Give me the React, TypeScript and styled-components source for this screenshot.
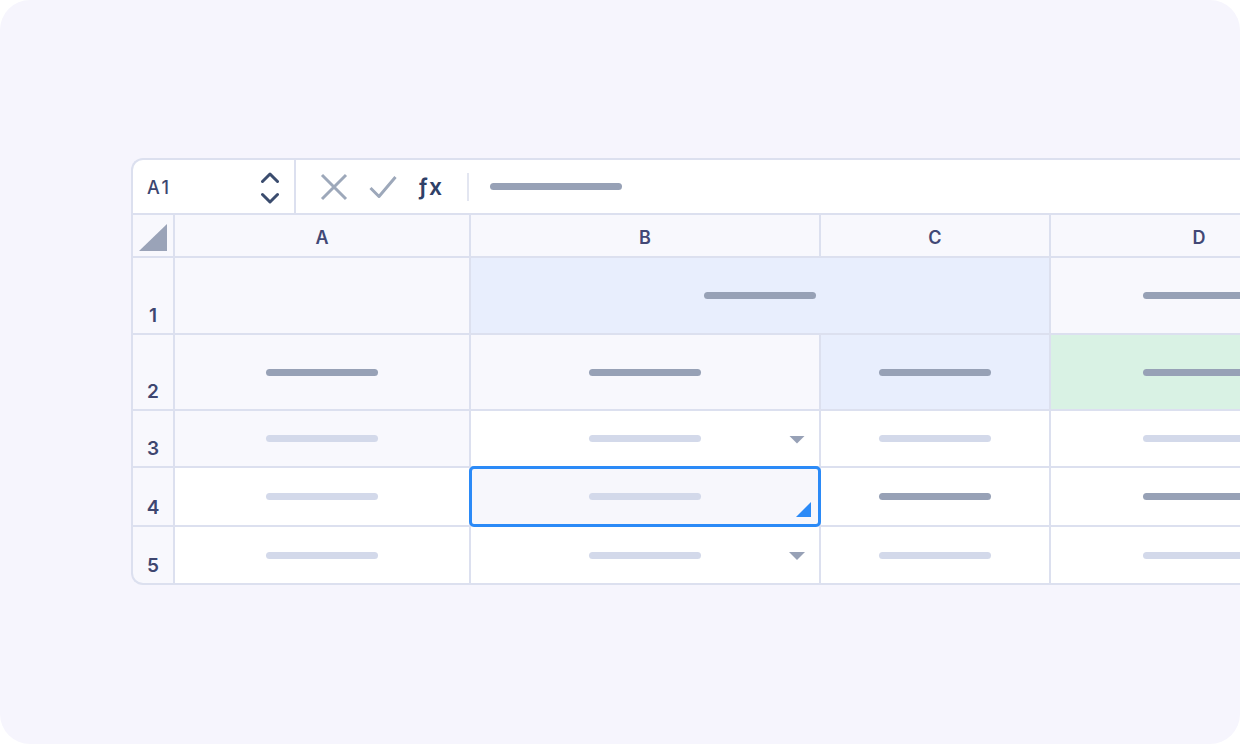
import React from 'react';
import styled, { createGlobalStyle } from 'styled-components';

const GlobalStyle = createGlobalStyle`
  html, body {
    margin: 0;
    padding: 0;
    background: #ffffff;
  }
  body {
    font-family: Inter, 'Noto Sans', sans-serif;
  }
`;

const LINE = '#dce0ef';
const DARK_BAR = '#97a1b6';
const LIGHT_BAR = '#d3d9ea';

const cellBg = {
  soft: '#f8f8fd',
  white: '#ffffff',
  blue: '#e8eefd',
  green: '#d9f2e4',
  selected: '#f7f7fc',
};

type Tone = keyof typeof cellBg;

const Frame = styled.div`
  width: 1240px;
  height: 744px;
  border-radius: 30px;
  background: #f6f5fd;
  overflow: hidden;
  display: flex;
  align-items: flex-start;
  padding: 158px 0 0 131px;
  box-sizing: border-box;
`;

const Sheet = styled.div`
  flex: none;
  display: flex;
  flex-direction: column;
  border: 2px solid ${LINE};
  border-right: none;
  border-radius: 12px 0 0 12px;
  overflow: hidden;
  background: ${LINE};
`;

const FormulaBar = styled.div`
  height: 53px;
  display: flex;
  align-items: center;
  background: #ffffff;
  border-bottom: 2px solid ${LINE};
`;

const NameBox = styled.div`
  width: 163px;
  height: 100%;
  box-sizing: border-box;
  display: flex;
  align-items: center;
  justify-content: space-between;
  padding: 2px 15px 0 14px;
  border-right: 2px solid ${LINE};
  font-size: 18px;
  font-weight: 500;
  letter-spacing: 2.5px;
  color: #3c4670;
`;

const Tools = styled.div`
  display: flex;
  align-items: center;
  gap: 21px;
  padding-left: 24px;
`;

const Fx = styled.span`
  font-family: Inter, 'DejaVu Sans', sans-serif;
  font-size: 23px;
  font-weight: 600;
  color: #2f4067;
  letter-spacing: 1px;
`;

const Divider = styled.div`
  width: 2px;
  height: 28px;
  background: #e3e6f1;
  margin-left: 24px;
`;

const Bar = styled.div<{ $tone: 'dark' | 'light'; $width?: number }>`
  width: ${(p) => p.$width ?? 112}px;
  height: 7px;
  border-radius: 4px;
  background: ${(p) => (p.$tone === 'dark' ? DARK_BAR : LIGHT_BAR)};
`;

const FormulaValue = styled.div`
  margin-left: 21px;
  display: flex;
`;

const Grid = styled.div`
  display: grid;
  grid-template-columns: 40px 294px 348px 228px 296px;
  grid-template-rows: 41px 75px 74px 55px 57px 56px;
  gap: 2px;
`;

const Corner = styled.div`
  background: ${cellBg.soft};
  display: flex;
  align-items: flex-end;
  justify-content: flex-end;
  padding: 0 6px 5px 0;
`;

const CornerMark = styled.div`
  width: 28px;
  height: 27px;
  background: #9aa3b8;
  clip-path: polygon(100% 0, 100% 100%, 0 100%);
`;

const ColHead = styled.div`
  background: ${cellBg.soft};
  display: flex;
  align-items: center;
  justify-content: center;
  padding-top: 4px;
  box-sizing: border-box;
  font-size: 18px;
  font-weight: 600;
  color: #424876;
`;

const RowHead = styled.div`
  background: ${cellBg.soft};
  display: flex;
  align-items: flex-end;
  justify-content: center;
  padding-bottom: 6px;
  box-sizing: border-box;
  font-size: 19px;
  font-weight: 600;
  color: #3e4670;
`;

const Cell = styled.div<{ $tone: Tone; $span?: number; $selected?: boolean }>`
  position: relative;
  background: ${(p) => cellBg[p.$tone]};
  grid-column: span ${(p) => p.$span ?? 1};
  display: flex;
  align-items: center;
  justify-content: center;
  ${(p) =>
    p.$selected &&
    `
    z-index: 1;
    outline: 3px solid #2b8af7;
    outline-offset: -1px;
    border-radius: 3px;
  `}
`;

const Dropdown = styled.div`
  position: absolute;
  right: 14px;
  top: 50%;
  margin-top: -3px;
  width: 16px;
  height: 8px;
  background: #97a1b6;
  clip-path: polygon(0 0, 100% 0, 50% 100%);
`;

const FillHandle = styled.div`
  position: absolute;
  right: 8px;
  bottom: 8px;
  width: 15px;
  height: 15px;
  background: #2b8af7;
  clip-path: polygon(100% 0, 100% 100%, 0 100%);
`;

type CellSpec = {
  tone: Tone;
  bar?: 'dark' | 'light';
  span?: number;
  dropdown?: boolean;
  selected?: boolean;
};

const rows: CellSpec[][] = [
  [
    { tone: 'soft' },
    { tone: 'blue', bar: 'dark', span: 2 },
    { tone: 'soft', bar: 'dark' },
  ],
  [
    { tone: 'soft', bar: 'dark' },
    { tone: 'soft', bar: 'dark' },
    { tone: 'blue', bar: 'dark' },
    { tone: 'green', bar: 'dark' },
  ],
  [
    { tone: 'soft', bar: 'light' },
    { tone: 'white', bar: 'light', dropdown: true },
    { tone: 'white', bar: 'light' },
    { tone: 'white', bar: 'light' },
  ],
  [
    { tone: 'white', bar: 'light' },
    { tone: 'selected', bar: 'light', selected: true },
    { tone: 'white', bar: 'dark' },
    { tone: 'white', bar: 'dark' },
  ],
  [
    { tone: 'white', bar: 'light' },
    { tone: 'white', bar: 'light', dropdown: true },
    { tone: 'white', bar: 'light' },
    { tone: 'white', bar: 'light' },
  ],
];

const Chevrons = () => (
  <svg width="18" height="32" viewBox="0 0 18 32" fill="none">
    <path
      d="M1.5 9.5 L9 2 L16.5 9.5 M1.5 22.5 L9 30 L16.5 22.5"
      stroke="#3b4c6e"
      strokeWidth="3"
      strokeLinecap="round"
      strokeLinejoin="round"
    />
  </svg>
);

const CancelIcon = () => (
  <svg width="28" height="28" viewBox="0 0 28 28" fill="none">
    <path d="M2 2 L26 26 M26 2 L2 26" stroke="#9da8ba" strokeWidth="3" />
  </svg>
);

const ConfirmIcon = () => (
  <svg width="28" height="28" viewBox="0 0 28 28" fill="none">
    <path
      d="M1.5 15 L10 23.5 L26.5 4"
      stroke="#9da8ba"
      strokeWidth="3"
      strokeLinejoin="round"
    />
  </svg>
);

export default function App() {
  return (
    <>
      <GlobalStyle />
      <Frame>
        <Sheet>
          <FormulaBar>
            <NameBox>
              <span>A1</span>
              <Chevrons />
            </NameBox>
            <Tools>
              <CancelIcon />
              <ConfirmIcon />
              <Fx>ƒx</Fx>
            </Tools>
            <Divider />
            <FormulaValue>
              <Bar $tone="dark" $width={132} />
            </FormulaValue>
          </FormulaBar>
          <Grid>
            <Corner>
              <CornerMark />
            </Corner>
            {['A', 'B', 'C', 'D'].map((c) => (
              <ColHead key={c}>{c}</ColHead>
            ))}
            {rows.map((row, i) => (
              <React.Fragment key={i}>
                <RowHead>{i + 1}</RowHead>
                {row.map((cell, j) => (
                  <Cell
                    key={j}
                    $tone={cell.tone}
                    $span={cell.span}
                    $selected={cell.selected}
                  >
                    {cell.bar && <Bar $tone={cell.bar} />}
                    {cell.dropdown && <Dropdown />}
                    {cell.selected && <FillHandle />}
                  </Cell>
                ))}
              </React.Fragment>
            ))}
          </Grid>
        </Sheet>
      </Frame>
    </>
  );
}
